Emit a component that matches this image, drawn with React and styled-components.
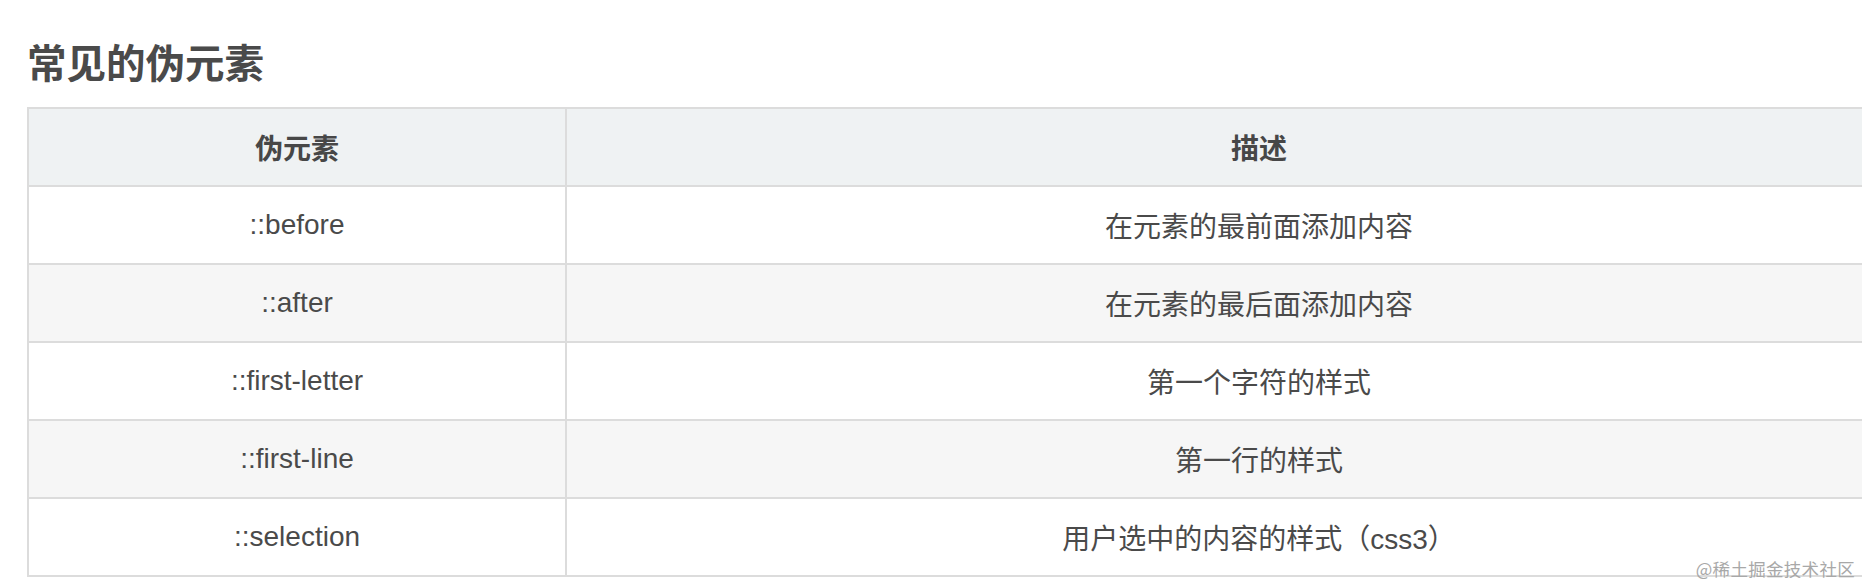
import React from 'react';
import styled, { createGlobalStyle } from 'styled-components';

const GlobalStyle = createGlobalStyle`
  html,
  body {
    margin: 0;
    padding: 0;
    background: #fff;
    overflow: hidden;
  }
  * {
    box-sizing: border-box;
  }
`;

const Page = styled.div`
  position: relative;
  width: 1862px;
  height: 586px;
  padding: 33px 0 0 27px;
  font-family: 'Liberation Sans', 'Noto Sans CJK SC', sans-serif;
  color: #333;
`;

const Title = styled.h2`
  margin: 0 0 18px;
  font-family: 'Noto Sans CJK SC', sans-serif;
  font-size: 39.5px;
  line-height: 56px;
  font-weight: 700;
  color: #4a4a4a;
`;

const Table = styled.div`
  display: flex;
  flex-direction: column;
  width: 1926px;
  border-top: 2px solid #dcdcdc;
  border-left: 2px solid #dcdcdc;
`;

const Row = styled.div`
  display: grid;
  grid-template-columns: 538px 1fr;
  background: ${(p) => (p.$head ? '#eff2f3' : p.$striped ? '#f6f6f6' : '#fff')};
`;

const Cell = styled.div`
  height: 78px;
  display: flex;
  align-items: center;
  justify-content: center;
  border-right: 2px solid #dcdcdc;
  border-bottom: 2px solid #dcdcdc;
  font-size: 28px;
  font-weight: ${(p) => (p.$head ? 700 : 400)};
  color: ${(p) => (p.$head ? '#474747' : '#4a4a4a')};
  font-family: ${(p) =>
    p.$head ? "'Noto Sans CJK SC', sans-serif" : "'Liberation Sans', 'Noto Sans CJK SC', sans-serif"};
`;

const Watermark = styled.span`
  position: absolute;
  right: 7px;
  bottom: 6px;
  font-family: 'Noto Sans CJK SC', sans-serif;
  font-size: 17.5px;
  line-height: 22px;
  color: #a8a8a8;
  letter-spacing: 0.3px;
`;

const rows = [
  ['::before', '在元素的最前面添加内容'],
  ['::after', '在元素的最后面添加内容'],
  ['::first-letter', '第一个字符的样式'],
  ['::first-line', '第一行的样式'],
  ['::selection', '用户选中的内容的样式（css3）'],
];

export default function App() {
  return (
    <>
      <GlobalStyle />
      <Page>
        <Title>常见的伪元素</Title>
        <Table>
          <Row $head>
            <Cell $head>伪元素</Cell>
            <Cell $head>描述</Cell>
          </Row>
          {rows.map(([name, desc], i) => (
            <Row key={name} $striped={i % 2 === 1}>
              <Cell>{name}</Cell>
              <Cell>{desc}</Cell>
            </Row>
          ))}
        </Table>
        <Watermark>@稀土掘金技术社区</Watermark>
      </Page>
    </>
  );
}
